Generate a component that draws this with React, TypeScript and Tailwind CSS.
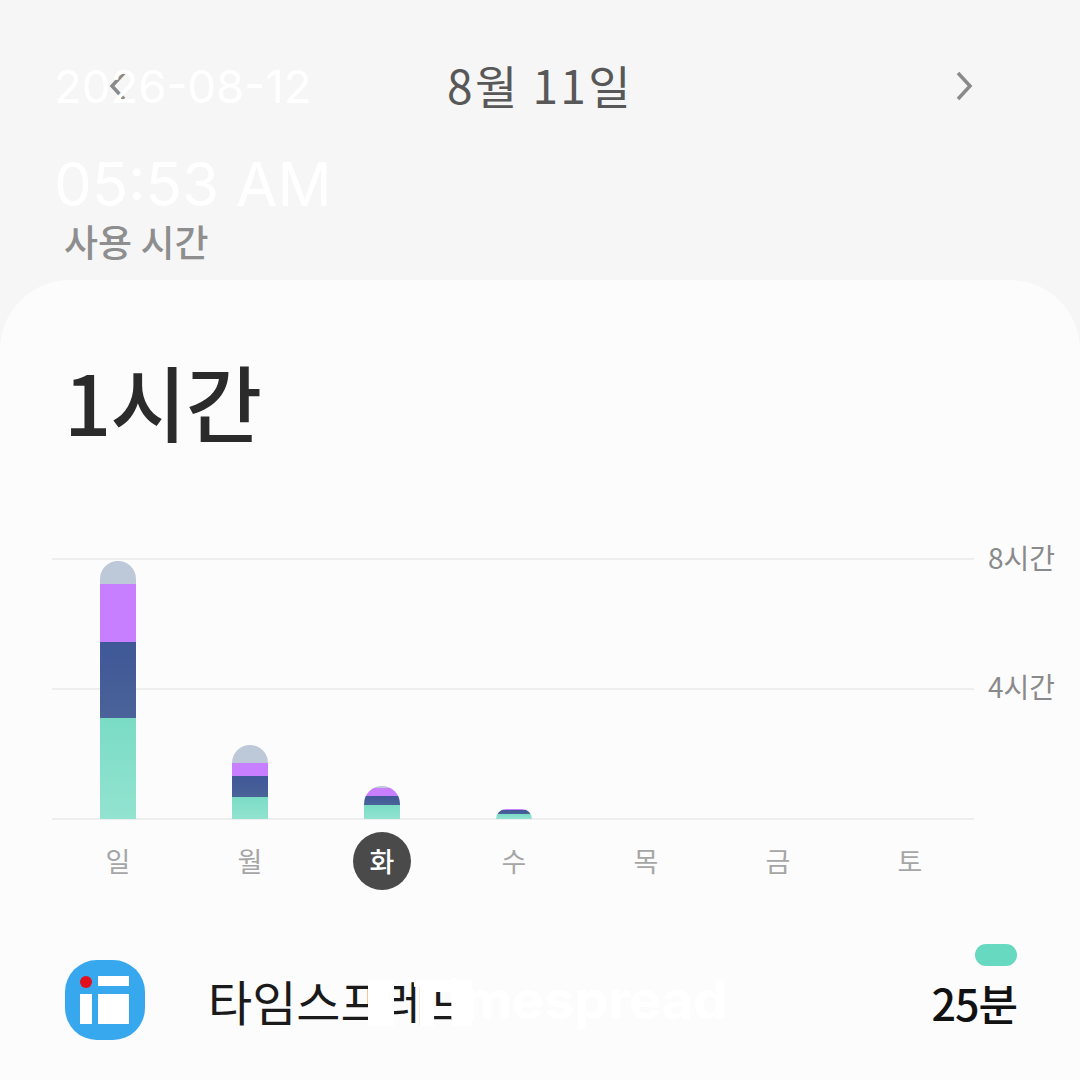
const days = ["일", "월", "화", "수", "목", "금", "토"];

// heights in px, top to bottom: gray, purple, blue, teal
const bars = [
  [23, 58, 76, 101],
  [18, 13, 21, 22],
  [2, 8, 9, 14],
  [0, 1, 4, 5],
  [0, 0, 0, 0],
  [0, 0, 0, 0],
  [0, 0, 0, 0],
];

function Bar({ heights }: { heights: number[] }) {
  const [gray, purple, blue, teal] = heights;
  if (gray + purple + blue + teal === 0) return <div className="w-[36px]" />;
  return (
    <div className="w-[36px] flex flex-col rounded-t-[18px] overflow-hidden">
      <div className="bg-[#bdc8d8]" style={{ height: gray }} />
      <div className="bg-[#c77fff]" style={{ height: purple }} />
      <div className="bg-gradient-to-b from-[#3f5897] to-[#4a6399]" style={{ height: blue }} />
      <div className="bg-gradient-to-b from-[#7adcc5] to-[#92e3d0]" style={{ height: teal }} />
    </div>
  );
}

export default function App() {
  return (
    <div
      className="relative w-[1080px] h-[1080px] overflow-hidden bg-[#f6f6f6]"
      style={{ fontFamily: '"Noto Sans CJK KR", "Noto Sans", sans-serif' }}
    >
      {/* header */}
      <div className="h-[280px] pl-[64px] pr-[104px] pt-[55px]">
        <div className="h-[62px] flex items-center justify-between">
          <svg width="24" height="36" viewBox="0 0 24 36" className="ml-[42px]" fill="none" stroke="#8a8a8a" strokeWidth="3.5">
            <path d="M18 5 L6 18 L18 31" />
          </svg>
          <span className="text-[46px] leading-none text-[#585858] tracking-[2.4px] -ml-[2px] -mt-[4px]">8월 11일</span>
          <svg width="24" height="36" viewBox="0 0 24 36" fill="none" stroke="#8a8a8a" strokeWidth="3.5">
            <path d="M6 5 L18 18 L6 31" />
          </svg>
        </div>
        <div className="mt-[102px] text-[37px] leading-[44px] font-medium text-[#8e8e8e]">사용 시간</div>
      </div>

      {/* card */}
      <div className="h-[800px] rounded-t-[70px] bg-[#fcfcfc]">
        <div className="pl-[64px] pt-[70px] h-[278px] text-[83px] leading-[100px] font-medium text-[#2b2b2b] tracking-[-1px]">1시간</div>

        <div className="flex">
          <div className="ml-[52px] w-[922px]">
            <div className="grid">
              <div className="col-start-1 row-start-1 h-[262px] flex flex-col justify-between">
                <div className="h-[2px] bg-[#eeeeee]" />
                <div className="h-[2px] bg-[#eeeeee]" />
                <div className="h-[2px] bg-[#eeeeee]" />
              </div>
              <div className="col-start-1 row-start-1 h-[261px] pl-[48px] flex items-end gap-[96px]">
                {bars.map((b, i) => (
                  <Bar key={i} heights={b} />
                ))}
              </div>
            </div>
            <div className="pl-[37px] mt-[12px] flex gap-[74px]">
              {days.map((d) => (
                <div
                  key={d}
                  className={
                    d === "화"
                      ? "w-[58px] h-[58px] rounded-full bg-[#4a4a4a] text-white flex items-center justify-center text-[27px] font-medium"
                      : "w-[58px] h-[58px] flex items-center justify-center text-[27px] text-[#a6a6a6]"
                  }
                >
                  {d}
                </div>
              ))}
            </div>
          </div>
          <div className="ml-[14px] h-[163px] flex flex-col justify-between -mt-[18px] text-[28px] leading-[34px] text-[#8a8a8a]">
            <span>8시간</span>
            <span>4시간</span>
          </div>
        </div>

        {/* app row */}
        <div className="mt-[54px] pl-[65px] pr-[63px] flex items-start">
          <div className="relative mt-[16px] w-[80px] h-[80px] rounded-[32px] bg-[#38a8ee] shrink-0">
            <div className="absolute left-[15px] top-[16px] w-[12px] h-[12px] rounded-full bg-[#e2101c]" />
            <div className="absolute left-[15px] top-[34px] w-[12px] h-[30px] bg-white" />
            <div className="absolute left-[33px] top-[16px] w-[31px] h-[10px] bg-white" />
            <div className="absolute left-[33px] top-[34px] w-[31px] h-[30px] bg-white" />
          </div>
          <span className="ml-[63px] mt-[32px] text-[48px] leading-[48px] text-[#1a1a1a]">타임스프레드</span>
          <div className="ml-auto flex flex-col items-end">
            <div className="w-[42px] h-[22px] rounded-full bg-[#68d9c1]" />
            <span className="mt-[12px] text-[43px] leading-[48px] font-medium text-[#111111] tracking-[-1px]">25분</span>
          </div>
        </div>
      </div>

      {/* erased patches over the app name */}
      <div className="absolute left-[368px] top-[980px] w-[26px] h-[46px] bg-white" />
      <div className="absolute left-[420px] top-[980px] w-[14px] h-[46px] bg-white" />
      <div className="absolute left-[434px] top-[980px] w-[38px] h-[12px] bg-white" />
      <div className="absolute left-[452px] top-[992px] w-[20px] h-[34px] bg-white" />

      {/* white overlaid stamps */}
      <div className="absolute left-[54px] top-[58px] text-[45.5px] leading-[58px] text-white" style={{ fontFamily: "Inter, sans-serif" }}>
        2026-08-12
      </div>
      <div className="absolute left-[54px] top-[148px] text-[60px] leading-[72px] text-white" style={{ fontFamily: "Inter, sans-serif" }}>
        05:53 AM
      </div>
      <div className="absolute left-[412px] top-[969px] text-[54px] leading-[62px] font-bold text-white" style={{ fontFamily: "Inter, sans-serif" }}>
        Timespread
      </div>
    </div>
  );
}
